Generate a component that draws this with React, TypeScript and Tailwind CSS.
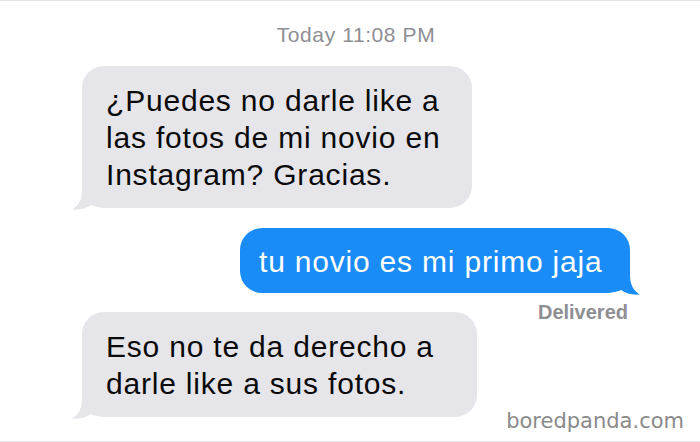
import React from "react";

const GRAY = "#e5e5ea";
const BLUE = "#1a8cf8";

function TailLeft({ color }: { color: string }) {
  return (
    <svg
      className="absolute left-[-11px] bottom-[-3px]"
      width="34"
      height="27"
      viewBox="0 0 34 27"
    >
      <path
        d="M11 0 L11 6 C11 15 8 21.5 1 25.5 C9 26.2 15 24.5 20 21 C23 22.6 27 23.2 34 23 L34 0 Z"
        fill={color}
      />
    </svg>
  );
}

function TailRight({ color }: { color: string }) {
  return (
    <svg
      className="absolute right-[-11px] bottom-[-3px] -scale-x-100"
      width="34"
      height="27"
      viewBox="0 0 34 27"
    >
      <path
        d="M11 0 L11 6 C11 15 8 21.5 1 25.5 C9 26.2 15 24.5 20 21 C23 22.6 27 23.2 34 23 L34 0 Z"
        fill={color}
      />
    </svg>
  );
}

export default function App() {
  const msg = "text-[30px] leading-[37px] tracking-[0.8px]";
  return (
    <div
      className="relative w-[700px] h-[442px] overflow-hidden bg-white border-t border-b border-[#e4e4e8] flex flex-col"
      style={{ fontFamily: '"Liberation Sans", Arial, sans-serif' }}
    >
      <div className="pt-[22px] pl-[12px] text-center text-[21px] leading-[24px] tracking-[0.6px] text-[#8e8e93]">
        Today 11:08 PM
      </div>

      <div className="relative ml-[82px] mt-[19px] w-[390px] rounded-[22px] bg-[#e5e5ea] pl-[24px] pr-[14px] pt-[16px] pb-[15px]">
        <TailLeft color={GRAY} />
        <p className={`relative text-[#0a0a0a] ${msg}`}>
          ¿Puedes no darle like a
          <br />
          las fotos de mi novio en
          <br />
          Instagram? Gracias.
        </p>
      </div>

      <div className="relative self-end mr-[70px] mt-[20px] w-[390px] rounded-[22px] bg-[#1a8cf8] pl-[19px] pt-[15px] pb-[13px]">
        <TailRight color={BLUE} />
        <p className={`relative text-white ${msg}`}>tu novio es mi primo jaja</p>
      </div>

      <div className="self-end mr-[72px] mt-[10px] text-[20px] leading-[18px] font-semibold text-[#8e8e93]">
        Delivered
      </div>

      <div className="relative ml-[82px] -mt-[9px] w-[395px] rounded-[22px] bg-[#e5e5ea] pl-[24px] pr-[14px] pt-[16px] pb-[15px]">
        <TailLeft color={GRAY} />
        <p className={`relative text-[#0a0a0a] ${msg}`}>
          Eso no te da derecho a
          <br />
          darle like a sus fotos.
        </p>
      </div>

      <div
        className="absolute right-[16px] bottom-[8px] text-[21px] leading-[24px] text-[#8a8a8a]"
        style={{ fontFamily: '"DejaVu Sans", Verdana, sans-serif' }}
      >
        boredpanda.com
      </div>
    </div>
  );
}
